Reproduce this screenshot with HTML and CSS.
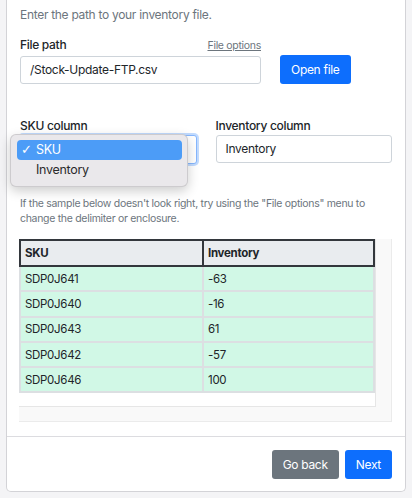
FILE: index.html
```html
<!DOCTYPE html>
<html lang="en">
<head>
    <meta charset="UTF-8">
    <meta name="viewport" content="width=device-width, initial-scale=1.0">
    <title>Inventory import</title>
    <link rel="stylesheet" href="styles.css">
</head>
<body>
    <div class="card">
        <div class="card-body">
            <p class="intro">Enter the path to your inventory file.</p>

            <div class="file-row">
                <div class="field file-field">
                    <div class="label-row">
                        <label class="form-label">File path</label>
                        <a class="options-link">File options</a>
                    </div>
                    <div class="form-control">/Stock-Update-FTP.csv</div>
                </div>
                <button class="btn btn-primary">Open file</button>
            </div>

            <div class="columns">
                <div class="field">
                    <label class="form-label">SKU column</label>
                    <div class="select-wrap">
                        <!-- closed select sits under the open menu -->
                        <div class="form-select focused"></div>
                        <div class="select-menu">
                            <div class="menu-item active"><span class="check">&#10003;</span>SKU</div>
                            <div class="menu-item">Inventory</div>
                        </div>
                    </div>
                </div>
                <div class="field">
                    <label class="form-label">Inventory column</label>
                    <div class="form-control">Inventory</div>
                </div>
            </div>

            <p class="help">If the sample below doesn't look right, try using the "File options" menu to change the delimiter or enclosure.</p>

            <div class="sample">
                <div class="sample-inner">
                    <table class="sample-table">
                        <thead>
                            <tr><th class="col-sku">SKU</th><th>Inventory</th></tr>
                        </thead>
                        <tbody>
                            <tr><td>SDP0J641</td><td>-63</td></tr>
                            <tr><td>SDP0J640</td><td>-16</td></tr>
                            <tr><td>SDP0J643</td><td>61</td></tr>
                            <tr><td>SDP0J642</td><td>-57</td></tr>
                            <tr><td>SDP0J646</td><td>100</td></tr>
                        </tbody>
                    </table>
                </div>
            </div>
        </div>
        <div class="card-footer">
            <button class="btn btn-secondary">Go back</button>
            <button class="btn btn-primary">Next</button>
        </div>
    </div>
</body>
</html>
```

FILE: styles.css
```css
body {
    margin: 0;
    background-color: #f4f4f6;
    font-family: Inter, 'Liberation Sans', sans-serif;
    letter-spacing: -0.3px;
    color: #212529;
}

.card {
    margin: 0 6px;
    background: #fff;
    border: 1px solid #d3d3d7;
    border-top: none;
    border-radius: 0 0 5px 5px;
}

.card-body {
    padding: 6px 13px 14px;
}

.intro {
    margin: 0;
    font-size: 12px;
    line-height: 18px;
    color: #6c757d;
}

.file-row {
    display: flex;
    align-items: flex-end;
    gap: 19px;
    margin-top: 13px;
}

.file-field {
    width: 241px;
}

.label-row {
    display: flex;
    justify-content: space-between;
    align-items: baseline;
}

.form-label {
    display: block;
    font-size: 12px;
    font-weight: 500;
    line-height: 16px;
    margin-bottom: 3px;
}

.options-link {
    font-size: 10.5px;
    color: #6c757d;
    text-decoration: underline;
}

.form-control,
.form-select {
    box-sizing: border-box;
    height: 28px;
    padding: 0 9px;
    border: 1px solid #ced4da;
    border-radius: 3px;
    font-size: 12px;
    line-height: 26px;
    background: #fff;
}

.btn {
    height: 29px;
    padding: 0 11px;
    border: none;
    border-radius: 3px;
    font-family: inherit;
    letter-spacing: inherit;
    font-size: 12px;
    color: #fff;
}

.btn-primary {
    background-color: #0d6efd;
}

.btn-secondary {
    background-color: #6c757d;
}

.columns {
    display: grid;
    grid-template-columns: 1fr 1fr;
    gap: 19px;
    margin-top: 34px;
}

.columns .form-label {
    margin-bottom: 1px;
}

.select-wrap {
    position: relative;
}

.form-select.focused {
    height: 29px;
    border-color: #86b7fe;
    box-shadow: 0 0 0 2px rgba(13, 110, 253, 0.25);
}

.select-menu {
    position: absolute;
    top: -1px;
    left: -10px;
    width: 178px;
    box-sizing: border-box;
    padding: 5px 5px 6px 6px;
    background: #eae8eb;
    border: 1px solid rgba(0, 0, 0, 0.12);
    border-radius: 6px;
    box-shadow: 0 4px 12px rgba(0, 0, 0, 0.2);
}

.menu-item {
    height: 20px;
    line-height: 20px;
    padding-left: 19px;
    border-radius: 4px;
    font-size: 12.5px;
    color: #2b2b2b;
    position: relative;
}

.menu-item.active {
    background: #4c9cf7;
    color: #fff;
}

.check {
    position: absolute;
    left: 4px;
    top: 0;
    font-size: 13px;
    font-weight: 700;
    font-family: 'DejaVu Sans', sans-serif;
}

.help {
    margin: 32px 0 0;
    font-size: 10.5px;
    line-height: 15px;
    color: #6c757d;
}

.sample {
    margin-top: 13px;
    margin-left: -1px;
    padding: 0 15px 14px 0;
    background: #f9f9f9;
    border-right: 1px solid #ebebeb;
    border-bottom: 1px solid #ebebeb;
}

.sample-inner {
    background: #fff;
    padding-bottom: 13px;
    border-bottom: 1px solid #e6e6e6;
    border-right: 1px solid #e6e6e6;
}

.sample-table {
    width: 100%;
    border-collapse: collapse;
    font-size: 11.5px;
}

.sample-table th,
.sample-table td {
    text-align: left;
    padding: 0 4px;
}

.sample-table th {
    height: 24px;
    font-weight: 700;
    background: #e9ecef;
    border: 2px solid #33373c;
}

.sample-table .col-sku {
    width: 173px;
}

.sample-table td {
    height: 23.3px;
    background: #d1f8e6;
    border: 2px solid #dcdfe2;
}

.card-footer {
    display: flex;
    justify-content: flex-end;
    gap: 6px;
    padding: 13px 13px 12px;
    border-top: 1px solid #dcdce0;
}
```
